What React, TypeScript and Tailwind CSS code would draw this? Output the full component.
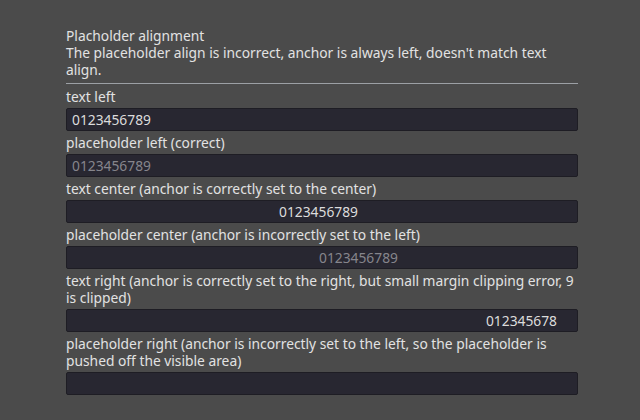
const rows = [
  { label: ["text left"], value: "0123456789", placeholder: false, align: "left" },
  { label: ["placeholder left (correct)"], value: "0123456789", placeholder: true, align: "left" },
  { label: ["text center (anchor is correctly set to the center)"], value: "0123456789", placeholder: false, align: "center" },
  { label: ["placeholder center (anchor is incorrectly set to the left)"], value: "0123456789", placeholder: true, align: "center-bug" },
  {
    label: ["text right (anchor is correctly set to the right, but small margin clipping error, 9", "is clipped)"],
    value: "012345678",
    placeholder: false,
    align: "right",
  },
  {
    label: ["placeholder right (anchor is incorrectly set to the left, so the placeholder is", "pushed off the visible area)"],
    value: "",
    placeholder: true,
    align: "left",
  },
];

const Field = ({ value, placeholder, align }: { value: string; placeholder: boolean; align: string }) => {
  const alignCls =
    align === "center"
      ? "justify-center pr-[7px]"
      : align === "center-bug"
        ? "pl-[252px]"
        : align === "right"
          ? "justify-end pr-[20px]"
          : "pl-[5px]";
  return (
    <div
      className={`h-[23px] w-full flex items-center rounded-[2px] border border-[#1e1d24] bg-[#282731] overflow-hidden ${alignCls}`}
    >
      <span className={`pb-px whitespace-nowrap ${placeholder ? "text-[#86858c]" : "text-[#dcdcdc]"}`}>{value}</span>
    </div>
  );
};

const App = () => {
  return (
    <div
      className="w-[640px] h-[420px] bg-[#4b4b4b] text-[#e2e2e2] text-[13.8px] leading-[17px] overflow-hidden"
      style={{ fontFamily: '"Noto Sans", "Open Sans", sans-serif' }}
    >
      <div className="ml-[66px] w-[512px] pt-[27px] flex flex-col whitespace-nowrap">
        <div>Placholder alignment</div>
        <div>The placeholder align is incorrect, anchor is always left, doesn't match text</div>
        <div>align.</div>
        <div className="mt-[5px] mb-[4px] h-px bg-[#9ca0a5]" />
        <div className="flex flex-col gap-[3px]">
          {rows.map((r) => (
            <div key={r.label[0]} className="flex flex-col gap-[3px]">
              <div>
                {r.label.map((line) => (
                  <div key={line}>{line}</div>
                ))}
              </div>
              <Field value={r.value} placeholder={r.placeholder} align={r.align} />
            </div>
          ))}
        </div>
      </div>
    </div>
  );
};

export default App;
